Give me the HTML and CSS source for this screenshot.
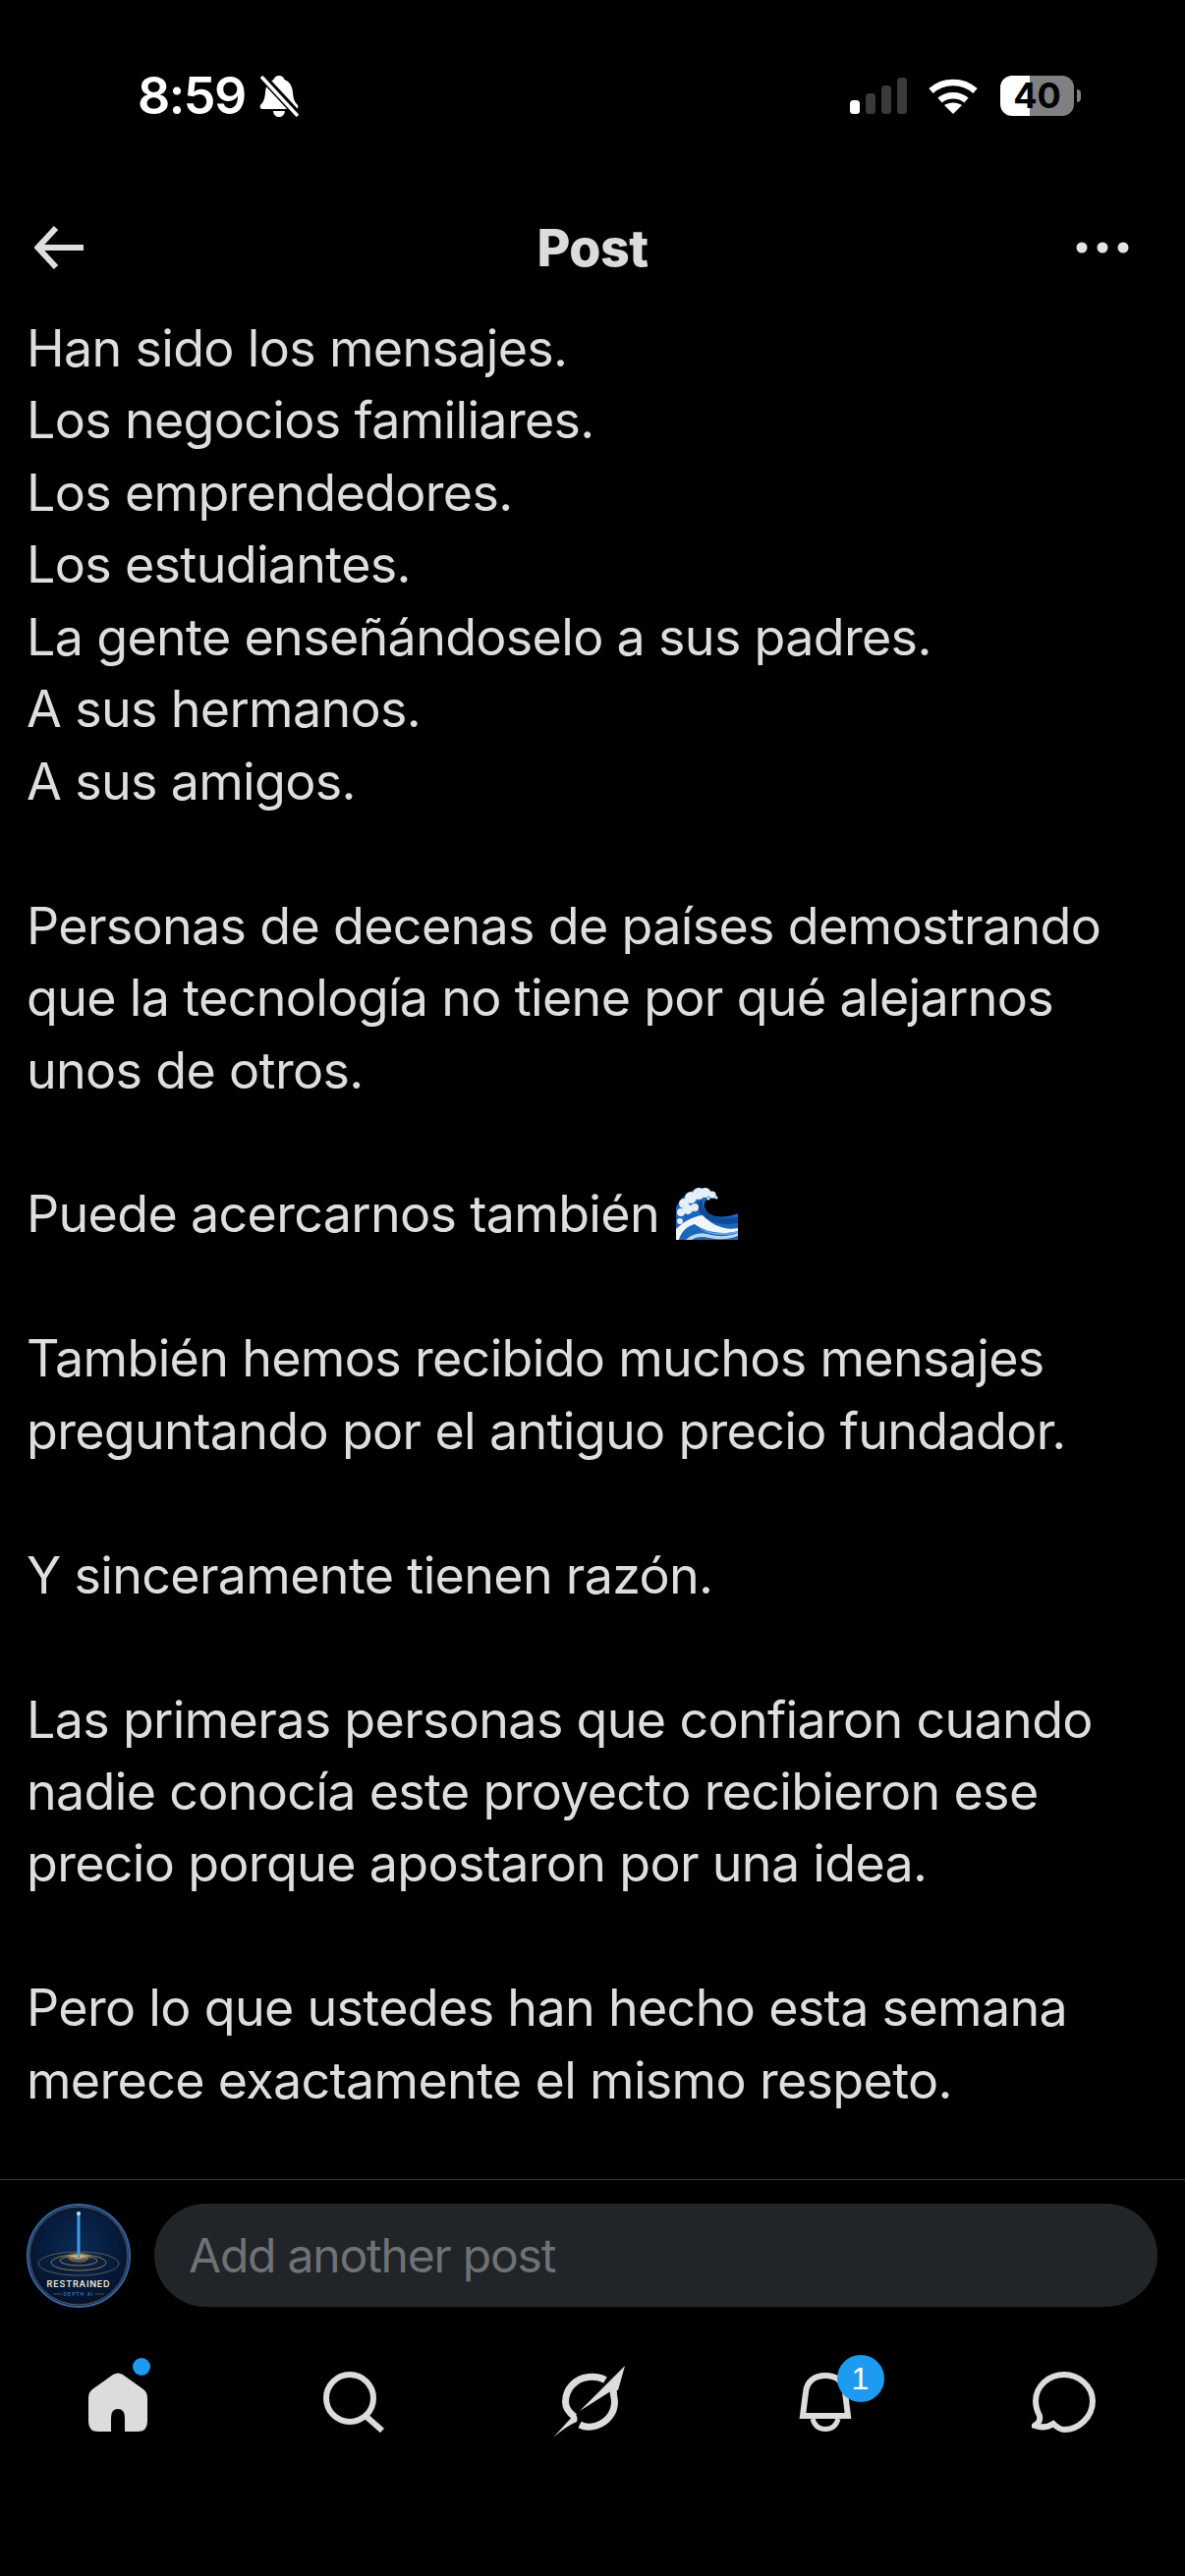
FILE: index.html
```html
<!DOCTYPE html>
<html lang="es">
<head>
<meta charset="utf-8">
<title>Post</title>
<link rel="stylesheet" href="styles.css">
</head>
<body>
<div class="phone">
  <div class="status">
    <div class="status-left">
      <span class="time">8:59</span>
      <svg class="mute" width="40" height="42" viewBox="0 0 40 42"><path fill="#fff" d="M20 0C23 0 25 2 25.500 4C31 6 33.500 11 34 17C34.500 24 36 27 39 30C40 32 39 34 37 34H3C1 34 0 32 1 30C4 27 5.500 24 6 17C6.500 11 9 6 14.500 4C15 2 17 0 20 0ZM14 36H26C25.500 40 23 42 20 42C17 42 14.500 40 14 36Z"/><path stroke="#000" stroke-width="8" d="M1 -1L42 43"/><path stroke="#fff" stroke-width="3.500" d="M2 1L39 41"/></svg>
    </div>
    <div class="status-right">
      <svg class="signal" width="58" height="37" viewBox="0 0 58 37"><rect y="23" width="10" height="14" rx="3.500" fill="#fff"/><rect x="16" y="16" width="10" height="21" rx="3.500" fill="#3a3a3a"/><rect x="32" y="8" width="10" height="29" rx="3.500" fill="#3a3a3a"/><rect x="48" width="10" height="37" rx="3.500" fill="#3a3a3a"/></svg>
      <svg class="wifi" width="50" height="38" viewBox="0 0 50 38"><path fill="none" stroke="#fff" stroke-width="6.500" d="M2.500 14.500C15 3 35 3 47.500 14.500"/><path fill="none" stroke="#fff" stroke-width="6.500" d="M11.500 24C19 17.500 31 17.500 38.500 24"/><path fill="#fff" d="M25 38L16 29C21 25.500 29 25.500 34 29Z"/></svg>
      <div class="battery"><span class="battery-num">40</span></div>
      <div class="battery-nub"></div>
    </div>
  </div>

  <header class="bar">
    <svg class="back" width="50" height="44" viewBox="0 0 50 44"><path fill="none" stroke="#dedede" stroke-width="6" d="M22 2L3.500 22L22 42M3.500 22H50"/></svg>
    <h1 class="bar-title">Post</h1>
    <svg class="more" width="54" height="12" viewBox="0 0 54 12"><circle cx="6" cy="6" r="5.500" fill="#e4e4e4"/><circle cx="27" cy="6" r="5.500" fill="#e4e4e4"/><circle cx="48" cy="6" r="5.500" fill="#e4e4e4"/></svg>
  </header>

  <main class="thread">
    <p class="para">Han sido los mensajes.<br>Los negocios familiares.<br>Los emprendedores.<br>Los estudiantes.<br>La gente enseñándoselo a sus padres.<br>A sus hermanos.<br>A sus amigos.</p>
    <p class="para">Personas de decenas de países demostrando<br>que la tecnología no tiene por qué alejarnos<br>unos de otros.</p>
    <p class="para">Puede acercarnos también <svg class="wave" width="63" height="53" viewBox="0 0 63 53"><path fill="#1a68bd" d="M0 20C4 10 14 3 24 0C32 -1 36 3 40 6C44 8 40 12 36 11C30 11 27 16 30 22C34 30 48 32 63 26V53H0Z"/><path fill="#0d4a98" d="M27 12C25 22 34 34 63 30V36C40 40 24 32 20 16Z"/><g fill="#e6eff7"><circle cx="8" cy="16" r="5"/><circle cx="15" cy="10" r="6"/><circle cx="23" cy="6" r="6"/><circle cx="30" cy="5" r="5"/><circle cx="37" cy="7" r="3.500"/><circle cx="41" cy="10" r="1.500"/><circle cx="33" cy="11" r="1.500"/><circle cx="5" cy="25" r="4"/><circle cx="12" cy="22" r="5"/><circle cx="19" cy="20" r="4"/><circle cx="4" cy="34" r="3"/></g><path fill="#f1f6fb" d="M0 42C8 34 18 29 27 28C36 37 48 44 63 41V44C46 49 28 44 19 37C11 39 5 45 3 53H0Z"/><path fill="#bcd5ee" d="M10 53C16 47 24 45 32 47C42 50 52 50 63 46V49C52 53 44 53 34 51C26 49 20 50 16 53Z"/><path fill="#6aa6dc" d="M22 40C32 46 46 48 63 44V46C46 50 32 48 22 40Z"/></svg></p>
    <p class="para">También hemos recibido muchos mensajes<br>preguntando por el antiguo precio fundador.</p>
    <p class="para">Y sinceramente tienen razón.</p>
    <p class="para">Las primeras personas que confiaron cuando<br>nadie conocía este proyecto recibieron ese<br>precio porque apostaron por una idea.</p>
    <p class="para">Pero lo que ustedes han hecho esta semana<br>merece exactamente el mismo respeto.</p>
  </main>

  <div class="composer">
    <svg class="avatar" width="106" height="106" viewBox="0 0 106 106">
      <defs>
        <radialGradient id="skyfill" cx="50%" cy="40%" r="60%"><stop offset="0" stop-color="#0b2a55"/><stop offset="1" stop-color="#04112a"/></radialGradient>
        <radialGradient id="glow" cx="50%" cy="50%" r="50%"><stop offset="0" stop-color="#ffd98a"/><stop offset="1" stop-color="#ffb040" stop-opacity="0"/></radialGradient>
      </defs>
      <circle cx="53" cy="53" r="52" fill="url(#skyfill)" stroke="#2f66ac" stroke-width="2"/>
      <circle cx="53" cy="53" r="50" fill="none" stroke="#a89a78" stroke-width=".6"/>
      <g fill="none" stroke="#b58f4e" stroke-width=".8">
        <ellipse cx="53" cy="61" rx="41" ry="12" stroke="#6d6a58"/>
        <ellipse cx="53" cy="60" rx="28" ry="8"/>
        <ellipse cx="53" cy="58" rx="19" ry="5"/>
        <ellipse cx="53" cy="56" rx="9" ry="3"/>
      </g>
      <ellipse cx="53" cy="54" rx="14" ry="5" fill="url(#glow)"/>
      <rect x="51.500" y="9" width="3" height="46" fill="#3d9bf0"/>
      <circle cx="53" cy="10" r="2" fill="#bfe2ff"/>
      <text class="logo-main" x="53" y="85" text-anchor="middle">RESTRAINED</text>
      <text class="logo-sub" x="53" y="94" text-anchor="middle">DEPTH AI</text>
      <path stroke="#7f7a68" stroke-width=".6" d="M27 92H36M70 92H79"/>
    </svg>
    <div class="pill">Add another post</div>
  </div>

  <nav class="tabs">
    <div class="tab">
      <span class="tab-inner">
        <svg width="60" height="60" viewBox="0 0 60 60"><path fill="#dcdcdc" d="M25 2Q30 -1 35 2L56 17Q60 20 60 26V50Q60 60 50 60H37V46Q37 37 30 37Q23 37 23 46V60H10Q0 60 0 50V26Q0 20 4 17Z"/></svg>
        <span class="dot"></span>
      </span>
    </div>
    <div class="tab">
      <svg width="62" height="62" viewBox="0 0 62 62"><circle cx="27" cy="27" r="24" fill="none" stroke="#dcdcdc" stroke-width="6"/><path stroke="#dcdcdc" stroke-width="6" d="M43 45L60 60"/></svg>
    </div>
    <div class="tab">
      <svg class="grok" width="73" height="73" viewBox="0 0 73 73"><path fill="none" stroke="#dcdcdc" stroke-width="7" d="M53 14.500C47 11 41 11 36 11.500C22 13 12.500 24 12.500 37C12.500 42 15 47 22 52"/><path fill="none" stroke="#dcdcdc" stroke-width="7" d="M27 60C31 62 38 63 44 61C56 57 62.500 47 62.500 37C62.500 31 59.500 27 62 20"/><path fill="#dcdcdc" d="M73 0L27 46L60 25L66 25Z"/><path fill="#dcdcdc" d="M0 73L22 49C25 52 25 54 24 57C17 60 8 66 0 73Z"/></svg>
    </div>
    <div class="tab">
      <span class="tab-inner">
        <svg width="54" height="60" viewBox="0 0 54 60"><path fill="none" stroke="#dcdcdc" stroke-width="6" d="M4 44H50L47 20C46 9 38 3 27 3C16 3 8 9 7 20Z"/><path fill="none" stroke="#dcdcdc" stroke-width="5" d="M14 47C16 54 21 57.500 27 57.500C33 57.500 38 54 40 47"/></svg>
        <span class="badge">1</span>
      </span>
    </div>
    <div class="tab">
      <svg width="65" height="62" viewBox="0 0 65 62"><path fill="none" stroke="#dcdcdc" stroke-width="6" d="M33 3C17 3 4 15 4 30C4 36 6 41 8 45C9 50 7 52 3 55C9 57 16 57 22 53C26 57 29 59 33 59C48 59 62 46 62 30C62 15 48 3 33 3Z"/></svg>
    </div>
  </nav>
</div>
</body>
</html>
```
FILE: styles.css
```css
* { box-sizing: border-box; }
html, body { margin: 0; padding: 0; background: #000; }
.phone {
  width: 1206px;
  height: 2622px;
  display: flex;
  flex-direction: column;
  overflow: hidden;
  background: #000;
  color: #dedede;
  font-family: Inter, "Noto Sans", sans-serif;
}
.status {
  height: 186px;
  flex: none;
  display: flex;
  justify-content: space-between;
  align-items: flex-start;
  padding: 77px 106px 0 140px;
}
.status-left { display: flex; align-items: center; gap: 14px; height: 42px; }
.time { font-size: 52px; font-weight: 600; color: #fff; line-height: 42px; letter-spacing: -1.500px; }
.status-right { display: flex; align-items: flex-start; }
.signal { margin: 2px 22px 0 0; }
.wifi { margin: 1px 23px 0 0; }
.battery {
  width: 75px;
  height: 41px;
  border-radius: 12px;
  background: linear-gradient(90deg, #fff 0 30px, #808080 30px);
  display: flex;
  align-items: center;
  justify-content: center;
}
.battery-num { font-size: 36px; font-weight: 700; color: #000; line-height: 41px; }
.battery-nub {
  width: 4px;
  height: 13px;
  margin: 14px 0 0 3px;
  border-radius: 0 6px 6px 0;
  background: #808080;
}
.bar {
  height: 132px;
  flex: none;
  display: grid;
  grid-template-columns: 1fr auto 1fr;
  align-items: center;
  padding: 0 35px;
}
.back { justify-self: start; }
.more { justify-self: end; margin-right: 22px; }
.bar-title { margin: 0; font-size: 52px; font-weight: 800; letter-spacing: -.5px; color: #dcdcdc; }
.thread {
  flex: 1;
  min-height: 0;
  padding: 0 0 0 27px;
  font-size: 52px;
  line-height: 73.450px;
  letter-spacing: -.680px;
  font-weight: 400;
  white-space: nowrap;
}
.para { margin: 0 0 73.450px; }
.wave { vertical-align: -8px; margin-left: 3px; }
.composer {
  height: 155px;
  flex: none;
  display: flex;
  gap: 24px;
  align-items: flex-start;
  padding: 24px 28px 0 27px;
  border-top: 1px solid #3a3a3a;
}
.avatar { flex: none; }
.logo-main { font-family: Inter, sans-serif; font-size: 9px; font-weight: 600; letter-spacing: .8px; fill: #efe9d8; }
.logo-sub { font-family: Inter, sans-serif; font-size: 5px; letter-spacing: 1px; fill: #4d8fd8; }
.pill {
  flex: 1;
  height: 105px;
  display: flex;
  align-items: center;
  padding-left: 35px;
  border-radius: 53px;
  background: #212428;
  color: #6f7275;
  font-size: 48px;
  letter-spacing: -1.200px;
}
.tabs {
  flex: none;
  display: grid;
  grid-template-columns: 240px 240px 239px 241px 245px;
  padding-top: 35px;
  align-items: start;
  height: 249px;
}
.tab { display: flex; justify-content: center; align-items: center; height: 73px; }
.tab-inner { position: relative; display: flex; }
.dot {
  position: absolute;
  left: 45px;
  top: -15px;
  width: 18px;
  height: 18px;
  border-radius: 50%;
  background: #1d9bf0;
}
.badge {
  position: absolute;
  left: 39px;
  top: -18px;
  width: 48px;
  height: 48px;
  border-radius: 50%;
  background: #1d9bf0;
  color: #fff;
  font-family: "Liberation Sans", sans-serif;
  font-size: 32px;
  line-height: 48px;
  text-align: center;
}
```
